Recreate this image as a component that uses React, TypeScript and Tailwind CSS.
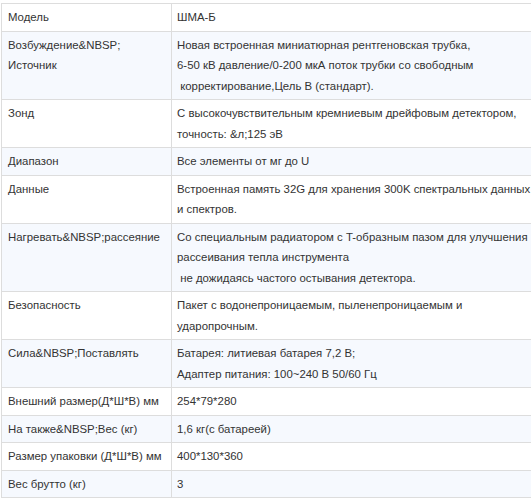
import React from "react";

type Row = { k: string[]; v: string[] };

const rows: Row[] = [
  { k: ["Модель"], v: ["ШМА-Б"] },
  {
    k: ["Возбуждение&NBSP;", "Источник"],
    v: [
      "Новая встроенная миниатюрная рентгеновская трубка,",
      "6-50 кВ давление/0-200 мкА поток трубки со свободным",
      "\u00a0корректирование,Цель B (стандарт).",
    ],
  },
  {
    k: ["Зонд"],
    v: ["С высокочувствительным кремниевым дрейфовым детектором,", "точность: &л;125 эВ"],
  },
  { k: ["Диапазон"], v: ["Все элементы от мг до U"] },
  {
    k: ["Данные"],
    v: ["Встроенная память 32G для хранения 300K спектральных данных", "и спектров."],
  },
  {
    k: ["Нагревать&NBSP;рассеяние"],
    v: [
      "Со специальным радиатором с T-образным пазом для улучшения",
      "рассеивания тепла инструмента",
      "\u00a0не дожидаясь частого остывания детектора.",
    ],
  },
  {
    k: ["Безопасность"],
    v: ["Пакет с водонепроницаемым, пыленепроницаемым и", "ударопрочным."],
  },
  {
    k: ["Сила&NBSP;Поставлять"],
    v: ["Батарея: литиевая батарея 7,2 В;", "Адаптер питания: 100~240 В 50/60 Гц"],
  },
  { k: ["Внешний размер(Д*Ш*В) мм"], v: ["254*79*280"] },
  { k: ["На также&NBSP;Вес (кг)"], v: ["1,6 кг(с батареей)"] },
  { k: ["Размер упаковки (Д*Ш*В) мм"], v: ["400*130*360"] },
  { k: ["Вес брутто (кг)"], v: ["3"] },
];

export default function App() {
  return (
    <div
      className="w-[531px] h-[503px] overflow-hidden bg-white pt-[3px] pl-[1px] text-[#333333] text-[11.4px] leading-[20.5px]"
      style={{ fontFamily: '"Liberation Sans", Arial, sans-serif' }}
    >
      <div className="w-[600px] border-t border-l border-[#dddddd]">
        {rows.map((r, i) => (
          <div
            key={i}
            className={
              "grid grid-cols-[170px_1fr] border-b border-[#dddddd] " +
              (i % 2 === 1 ? "bg-[#f6f9fe]" : "bg-white")
            }
          >
            <div className="border-r border-[#dddddd] px-[6px] py-[3px] whitespace-nowrap">
              {r.k.map((t, j) => (
                <div key={j}>{t}</div>
              ))}
            </div>
            <div className="px-[5px] py-[3px] whitespace-pre">
              {r.v.map((t, j) => (
                <div key={j}>{t}</div>
              ))}
            </div>
          </div>
        ))}
      </div>
    </div>
  );
}
